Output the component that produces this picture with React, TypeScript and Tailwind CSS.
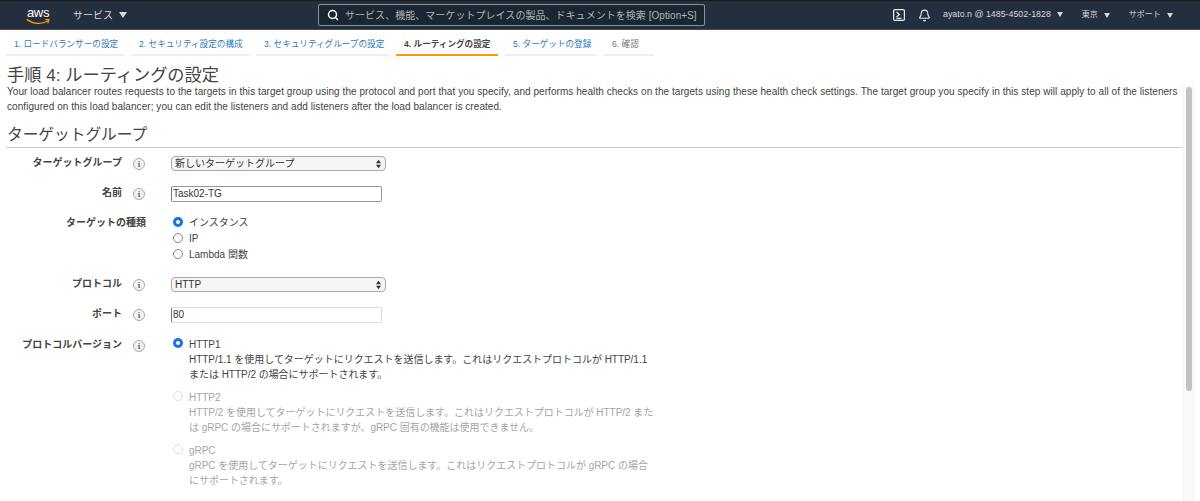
import { Search, Bell } from 'lucide-react'
import type { ReactNode } from 'react'

const FONT = "font-['Liberation_Sans','Noto_Sans_CJK_JP',sans-serif]"

const STEPS = [
  { label: '1. ロードバランサーの設定', width: 'w-[118px]', tone: 'text-[#2b7cb8]' },
  { label: '2. セキュリティ設定の構成', width: 'w-[118px]', tone: 'text-[#2b7cb8]' },
  { label: '3. セキュリティグループの設定', width: 'w-[133px]', tone: 'text-[#2b7cb8]' },
  { label: '4. ルーティングの設定', width: 'w-[102px]', tone: 'text-[#444] font-bold', active: true },
  { label: '5. ターゲットの登録', width: 'w-[92px]', tone: 'text-[#2b7cb8]' },
  { label: '6. 確認', width: 'w-[50px]', tone: 'text-[#777]' },
]

function Caret() {
  return <span className="ml-[6px] inline-block h-0 w-0 border-x-[4px] border-t-[6px] border-x-transparent border-t-[#d5dbdb]" />
}

function SmallCaret() {
  return <span className="ml-[6px] inline-block h-0 w-0 border-x-[3px] border-t-[5px] border-x-transparent border-t-[#d5dbdb]" />
}

function AwsLogo() {
  return (
    <div className="relative ml-[26px] h-[24px] w-[24px] text-white">
      <span className="block text-center text-[13px] leading-[20px] font-medium tracking-[-0.3px]">aws</span>
      <svg viewBox="0 0 26 8" className="absolute top-[15px] left-0 h-[8px] w-[25px]" fill="none">
        <path d="M1 1.5C8 6.5 17 6.5 22.5 3" stroke="#f90" strokeWidth="1.4" strokeLinecap="round" />
        <path d="M20.5 1.6 24 1.5 22.8 5" stroke="#f90" strokeWidth="1.2" strokeLinecap="round" />
      </svg>
    </div>
  )
}

function TopBar() {
  return (
    <header className="flex h-[30px] items-center border-t border-b border-t-[#1b1b1b] border-b-[#414d5c] bg-[#232f3e] text-[#d5dbdb]">
      <AwsLogo />
      <div className="ml-[23px] flex items-center text-[10px]">
        サービス
        <Caret />
      </div>
      <div className="ml-[191px] flex h-[22px] w-[387px] items-center rounded-[2px] border border-[#879596] bg-[#1b2633] pl-[8px] text-[10px] text-[#aab7b8]">
        <Search size={12} strokeWidth={3} className="mr-[6px] text-white" />
        <span className="whitespace-nowrap tracking-[0.04px]">サービス、機能、マーケットプレイスの製品、ドキュメントを検索 [Option+S]</span>
      </div>
      <svg viewBox="0 0 12 12" className="ml-[188px] h-[12px] w-[12px] text-[#e8eded]" fill="none">
        <rect x="0.6" y="0.6" width="10.8" height="10.8" rx="1.2" stroke="currentColor" strokeWidth="1.2" />
        <path d="M3.5 3 6.5 5.5 3.5 8M3.5 9.3H8.5" stroke="currentColor" strokeWidth="1.2" />
      </svg>
      <Bell size={13} className="ml-[13px] text-[#e8eded]" />
      <div className="ml-[12px] flex items-center text-[8.85px]">
        <span className="whitespace-nowrap">ayato.n @ 1485-4502-1828</span>
        <SmallCaret />
      </div>
      <div className="ml-[19px] flex items-center text-[8px]">
        東京
        <SmallCaret />
      </div>
      <div className="ml-[19px] flex items-center text-[8px]">
        サポート
        <SmallCaret />
      </div>
    </header>
  )
}

function StepTabs() {
  return (
    <nav className="flex gap-[7px] pl-[6px]">
      {STEPS.map((step) => (
        <div
          key={step.label}
          className={`${step.width} h-[26px] whitespace-nowrap border-b-2 pt-[8px] pl-[8px] text-[8.6px] leading-[12px] ${step.active ? 'border-[#f90]' : 'border-[#eeeeee]'} ${step.tone}`}
        >
          {step.label}
        </div>
      ))}
    </nav>
  )
}

function InfoIcon() {
  return (
    <span className="flex h-[12px] w-[12px] shrink-0 items-center justify-center rounded-full border border-[#aaa] bg-[#f2f2f2] font-['Liberation_Serif',serif] text-[9px] leading-none font-bold text-[#666]">
      i
    </span>
  )
}

function Row({ label, className, children, noInfo }: { label: string; className: string; children: ReactNode; noInfo?: boolean }) {
  if (noInfo) {
    return (
      <div className={`flex items-start ${className}`}>
        <div className="w-[146px] shrink-0 text-right text-[10px] leading-[14px] font-bold whitespace-nowrap text-[#444]">{label}</div>
        <div className="ml-[25px]">{children}</div>
      </div>
    )
  }
  return (
    <div className={`flex items-start ${className}`}>
      <div className="w-[122px] shrink-0 text-right text-[10px] leading-[14px] font-bold whitespace-nowrap text-[#444]">{label}</div>
      <div className="ml-[11px] w-[38px] shrink-0 pt-[2px]">
        <InfoIcon />
      </div>
      {children}
    </div>
  )
}

function SelectBox({ value }: { value: string }) {
  return (
    <div className="flex h-[15px] w-[215px] items-center justify-between rounded-[4px] border border-[#aaa] bg-[#f6f6f6] pr-[4px] pl-[3px] text-[10px] text-[#333]">
      <span>{value}</span>
      <svg viewBox="0 0 6 10" className="h-[10px] w-[5px]" fill="#333">
        <path d="M3 0 6 4H0zM3 10 0 6h6z" />
      </svg>
    </div>
  )
}

function TextBox({ value, dark }: { value: string; dark?: boolean }) {
  return (
    <div className={`h-[16px] w-[211px] rounded-[2px] border border-l-[#777] pl-[1px] text-[10px] leading-[14px] text-[#333] ${dark ? 'border-[#999]' : 'border-[#ddd]'}`}>
      {value}
    </div>
  )
}

function Radio({ checked, disabled }: { checked?: boolean; disabled?: boolean }) {
  if (checked) {
    return (
      <span className="flex h-[10px] w-[10px] shrink-0 items-center justify-center rounded-full bg-[#1a73e8]">
        <span className="h-[4px] w-[4px] rounded-full bg-white" />
      </span>
    )
  }
  return <span className={`block h-[10px] w-[10px] shrink-0 rounded-full border bg-white ${disabled ? 'border-[#ddd]' : 'border-[#888]'}`} />
}

function RadioLine({ label, checked }: { label: string; checked?: boolean }) {
  return (
    <div className="flex h-[16px] items-center gap-[6px] pl-[2px] text-[10px] text-[#444]">
      <Radio checked={checked} />
      {label}
    </div>
  )
}

function VersionOption({ title, lines, checked, disabled, className }: { title: string; lines: string[]; checked?: boolean; disabled?: boolean; className?: string }) {
  return (
    <div className={`flex gap-[6px] pl-[2px] text-[10px] leading-[15px] ${disabled ? 'text-[#a5a5a5]' : 'text-[#444]'} ${className ?? ''}`}>
      <div className="pt-[1px]">
        <Radio checked={checked} disabled={disabled} />
      </div>
      <div className="whitespace-nowrap tracking-[-0.03px]">
        <div>{title}</div>
        {lines.map((line) => (
          <div key={line}>{line}</div>
        ))}
      </div>
    </div>
  )
}

export default function App() {
  return (
    <div className={`h-[501px] w-[1200px] overflow-hidden bg-white ${FONT}`}>
      <TopBar />
      <div className="flex">
        <main className="w-[1183px] shrink-0">
          <StepTabs />
          <h1 className="mt-[9px] ml-[7px] text-[17.2px] leading-[20px] text-[#444]">手順 4: ルーティングの設定</h1>
          <p className="mt-[-1px] ml-[7px] w-[1176px] text-[10px] leading-[15px] tracking-[0.06px] text-[#444]">
            Your load balancer routes requests to the targets in this target group using the protocol and port that you specify, and performs health checks on the targets using these health check settings. The target group you specify in this step will apply to all of the listeners configured on this load balancer; you can edit the listeners and add listeners after the load balancer is created.
          </p>
          <h2 className="mt-[11px] ml-[7px] text-[15.7px] leading-[20px] text-[#444]">ターゲットグループ</h2>
          <div className="mt-[2px] ml-[6px] h-px bg-[#cccccc]" />
          <Row label="ターゲットグループ" className="mt-[8px]">
            <SelectBox value="新しいターゲットグループ" />
          </Row>
          <Row label="名前" className="mt-[15px]">
            <TextBox value="Task02-TG" dark />
          </Row>
          <Row label="ターゲットの種類" className="mt-[14px]" noInfo>
            <div className="mt-[-2px]">
              <RadioLine label="インスタンス" checked />
              <RadioLine label="IP" />
              <RadioLine label="Lambda 関数" />
            </div>
          </Row>
          <Row label="プロトコル" className="mt-[15px]">
            <SelectBox value="HTTP" />
          </Row>
          <Row label="ポート" className="mt-[15px]">
            <TextBox value="80" />
          </Row>
          <Row label="プロトコルバージョン" className="mt-[15px]">
            <div className="mt-[-1px]">
              <VersionOption
                checked
                title="HTTP1"
                lines={['HTTP/1.1 を使用してターゲットにリクエストを送信します。これはリクエストプロトコルが HTTP/1.1', 'または HTTP/2 の場合にサポートされます。']}
              />
              <VersionOption
                disabled
                className="mt-[8px]"
                title="HTTP2"
                lines={['HTTP/2 を使用してターゲットにリクエストを送信します。これはリクエストプロトコルが HTTP/2 また', 'は gRPC の場合にサポートされますが、gRPC 固有の機能は使用できません。']}
              />
              <VersionOption
                disabled
                className="mt-[8px]"
                title="gRPC"
                lines={['gRPC を使用してターゲットにリクエストを送信します。これはリクエストプロトコルが gRPC の場合', 'にサポートされます。']}
              />
            </div>
          </Row>
        </main>
        <div className="mt-[55px] flex h-[416px] w-[11px] justify-center border-x border-[#f3f3f3] bg-[#fafafa] pt-[2px]">
          <div className="h-[304px] w-[6px] rounded-full bg-[#c2c2c2]" />
        </div>
      </div>
    </div>
  )
}
